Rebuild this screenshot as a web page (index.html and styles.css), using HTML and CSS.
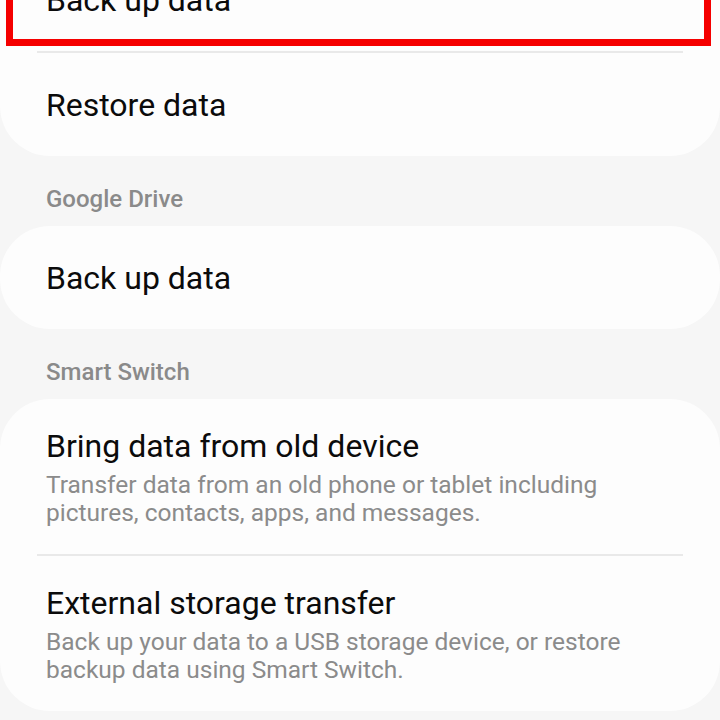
FILE: index.html
```html
<!DOCTYPE html>
<html lang="en">
<head>
<meta charset="utf-8">
<title>Backup and restore</title>
<link rel="stylesheet" href="styles.css">
</head>
<body>
<main class="page">
  <section class="card card-first">
    <div class="row row-highlight">
      <div class="title">Back up data</div>
    </div>
    <div class="divider"></div>
    <div class="row">
      <div class="title">Restore data</div>
    </div>
  </section>

  <h2 class="section-header">Google Drive</h2>
  <section class="card">
    <div class="row">
      <div class="title">Back up data</div>
    </div>
  </section>

  <h2 class="section-header">Smart Switch</h2>
  <section class="card">
    <div class="row row-detail">
      <div class="title">Bring data from old device</div>
      <div class="subtitle">Transfer data from an old phone or tablet including pictures, contacts, apps, and messages.</div>
    </div>
    <div class="divider"></div>
    <div class="row row-detail">
      <div class="title">External storage transfer</div>
      <div class="subtitle">Back up your data to a USB storage device, or restore backup data using Smart Switch.</div>
    </div>
  </section>
</main>
</body>
</html>
```

FILE: styles.css
```css
html, body {
  margin: 0;
  padding: 0;
  background: #f6f6f6;
}

body {
  font-family: Roboto, "Noto Sans", "Liberation Sans", sans-serif;
  width: 720px;
  height: 720px;
  overflow: hidden;
}

.page {
  display: flex;
  flex-direction: column;
}

.card {
  background: #fdfdfd;
  border-radius: 50px;
  display: flex;
  flex-direction: column;
}

.card-first {
  margin-top: -52px;
  border-top-left-radius: 0;
  border-top-right-radius: 0;
}

.row {
  height: 103px;
  display: flex;
  flex-direction: column;
  justify-content: center;
  padding: 0 46px;
  position: relative;
}

.row-detail {
  height: auto;
  justify-content: flex-start;
  padding-top: 28px;
  padding-bottom: 27px;
}

.title {
  font-size: 32px;
  line-height: 38px;
  color: #0b0b0b;
  font-weight: 400;
}

.subtitle {
  font-size: 24.5px;
  line-height: 28px;
  color: #8b8b8b;
  margin-top: 6px;
  padding-right: 30px;
}

.divider {
  height: 2px;
  background: #e9e9e9;
  margin: 0 37px;
}

.section-header {
  margin: 0;
  font-size: 24px;
  line-height: 32px;
  font-weight: 500;
  color: #8a8a8a;
  padding: 27px 46px 11px;
}

.row-highlight::after {
  content: "";
  position: absolute;
  left: 6px;
  right: 9px;
  top: -30px;
  bottom: 5px;
  border: 7px solid #f50000;
  pointer-events: none;
}
```
